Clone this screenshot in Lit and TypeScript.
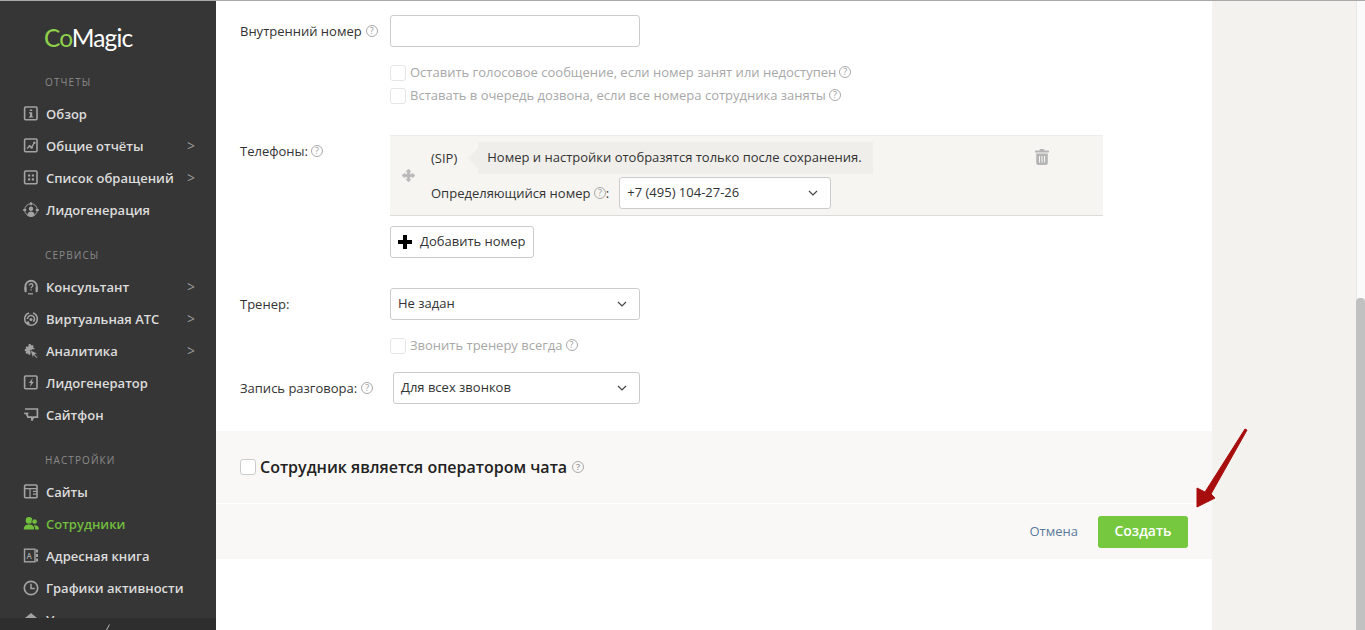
import { LitElement, html, css, svg } from "lit";
import { customElement } from "lit/decorators.js";

const ic = (body: unknown) => html`<svg class="ic" viewBox="0 0 16 16" width="16" height="16">${body}</svg>`;
const box = svg`<rect x="1.600" y="1" width="12.400" height="12.800" rx="1" fill="none" stroke="currentColor" stroke-width="1.600"/>`;

const icons: Record<string, unknown> = {
  info: ic(svg`${box}<path d="M6.800 3.400h2.400V5H6.800zM6 6.200h3.200v4.200h1v1.200H5.800v-1.200h1.200V7.400H6z" fill="currentColor"/>`),
  chart: ic(svg`${box}<path d="M4 10.500l2.600-2.400 2 1.400L11.400 4.500" fill="none" stroke="currentColor" stroke-width="1.300"/><circle cx="6.600" cy="8.100" r="1.200" fill="currentColor"/><circle cx="8.700" cy="9.500" r="1.200" fill="currentColor"/><circle cx="11.400" cy="4.700" r="1.200" fill="currentColor"/>`),
  list: ic(svg`${box}<path d="M5 4.400h2.200v2.200H5zM8.800 4.400H11v2.200H8.800zM5 8.200h2.200v2.200H5zM8.800 8.200H11v2.200H8.800z" fill="currentColor"/>`),
  lead: ic(svg`<circle cx="8" cy="8" r="6.300" fill="none" stroke="currentColor" stroke-width="1"/><circle cx="8" cy="6.800" r="2.200" fill="currentColor"/><path d="M4.300 13.400c.4-2.800 1.900-3.800 3.700-3.800s3.300 1 3.700 3.800A6.200 6.200 0 0 1 8 15a6.200 6.200 0 0 1-3.700-1.600z" fill="currentColor"/><path d="M8 .2v3M.2 8h3M12.800 8h3" stroke="currentColor" stroke-width="1.800"/>`),
  consult: ic(svg`<path d="M2.400 10.500V7.400a5.700 5.700 0 0 1 11.400 0v3.100" fill="none" stroke="currentColor" stroke-width="1.900"/><path d="M1.400 8.200h2.200v5H2.600a1.200 1.200 0 0 1-1.200-1.200zM12.600 8.200h2.200v3.800a1.200 1.200 0 0 1-1.200 1.200h-1z" fill="currentColor"/><path d="M6.300 6.400c0-2.200 3.600-2.200 3.600 0 0 1.400-1.800 1.400-1.800 2.800M8.100 10.200v1.400" fill="none" stroke="currentColor" stroke-width="1.300"/><path d="M5 14.800h5" stroke="currentColor" stroke-width="1.300"/>`),
  atc: ic(svg`<circle cx="8" cy="8" r="6.300" fill="none" stroke="currentColor" stroke-width="1.600" stroke-dasharray="27 4"/><path d="M4.500 8a3.500 3.500 0 0 1 7 0c0 1.200-.6 2-1.200 2.600" fill="none" stroke="currentColor" stroke-width="1.600"/><circle cx="8" cy="8.400" r="1.500" fill="currentColor"/><path d="M2.600 11.500l3-1.600 1.200 3.200-2 .9z" fill="currentColor"/>`),
  gear: ic(svg`<path d="M5.800 1h1.800l.4 1.500 1.400-.6 1.200 1.200-.7 1.300 1.500.5v1.400H9L8 9.400 6.800 12l-1.200-.3-.4-1.400-1.400.6L2.600 9.700l.7-1.300L1.800 8V6.200l1.500-.4-.7-1.400 1.200-1.200 1.400.7z" fill="currentColor"/><path d="M7.200 7l7.400 3.400-2.700 1 2.800 2.800-1.100 1.100-2.800-2.800-1 2.600z" fill="currentColor" stroke="#363636" stroke-width=".7"/>`),
  bolt: ic(svg`${box}<path d="M9.800 3L5.800 8h2.200L6.800 12l4.200-5.200H8.800z" fill="currentColor"/>`),
  phone: ic(svg`<path d="M2 2h12.400v8.200H10.600L8.800 13.600v-3.400H5L3.400 6.400" fill="none" stroke="currentColor" stroke-width="1.700"/><path d="M1.200 6.400h4.200" stroke="currentColor" stroke-width="1.600"/>`),
  sites: ic(svg`${box}<path d="M2 4.600h12M7 4.600v8.800M10 7.400h3.500M10 10.200h3.500" fill="none" stroke="currentColor" stroke-width="1.200"/>`),
  staff: ic(svg`<circle cx="6" cy="4.400" r="3.300" fill="currentColor"/><path d="M.8 13.600c0-3.800 2.400-5 5.200-5s5.200 1.200 5.200 5z" fill="currentColor"/><circle cx="11.600" cy="5.600" r="2.700" fill="currentColor" stroke="#363636" stroke-width=".8"/><path d="M12.200 13.600h3.800c0-3-1.600-4.400-4.400-4.400l-.8.600c1 .9 1.400 2.200 1.400 3.800z" fill="currentColor"/>`),
  book: ic(svg`<rect x="1.500" y="1.200" width="10.500" height="12.600" fill="none" stroke="currentColor" stroke-width="1.400"/><path d="M13 1.500h2v3h-2zM13 6h2v3h-2zM13 10.500h2v3h-2z" fill="currentColor"/><text x="3.400" y="10.500" font-size="8" font-family="Open Sans" fill="currentColor">A</text>`),
  clock: ic(svg`<circle cx="8" cy="8" r="6.700" fill="none" stroke="currentColor" stroke-width="1.700"/><path d="M8 3.800V8.600h3.800" fill="none" stroke="currentColor" stroke-width="1.500"/>`),
  notif: ic(svg`<path d="M8 1l6 5v9H2V6z" fill="currentColor"/>`),
};

const help = () => html`<span class="help">?</span>`;
const chevron = html`<svg class="chev" viewBox="0 0 10 6" width="10" height="6"><path d="M1 1l4 4 4-4" fill="none" stroke="#444" stroke-width="1.200"/></svg>`;

@customElement("app-side")
class AppSide extends LitElement {
  static styles = css`
    :host { display: block; width: 216px; height: 100%; background: #363636; position: relative; overflow: hidden; flex: none; font-family: "Open Sans", sans-serif; }
    .logo { height: 66px; padding-left: 44px; font-family: Lato, sans-serif; font-size: 24.500px; line-height: 76px; color: #fff; letter-spacing: -0.900px; box-sizing: border-box; white-space: nowrap; }
    .logo b { color: #8fd14a; font-weight: 400; }
    .label { height: 32px; line-height: 32px; padding-left: 45px; font-size: 10px; letter-spacing: 1.100px; color: #8a8a8a; text-transform: uppercase; }
    .group { margin-bottom: 13px; }
    .item { height: 32px; display: flex; align-items: center; padding-left: 23px; font-size: 13px; font-weight: 600; color: #dcdcdc; position: relative; white-space: nowrap; }
    .item .ic { color: #a3a3a3; margin-right: 7px; flex: none; }
    .item.on, .item.on .ic { color: #71bd3c; }
    .arr { position: absolute; left: 187px; top: 6px; color: #999; font-weight: 400; font-size: 14px; }
    .foot { position: absolute; left: 0; right: 0; bottom: 0; height: 12px; background: #2e2e2e; }
    .foot svg { position: absolute; left: 105px; top: 6px; }
  `;
  item(icon: string, text: string, arrow = false, on = false) {
    return html`<div class="item ${on ? "on" : ""}">${icons[icon]}<span>${text}</span>${arrow ? html`<span class="arr">&gt;</span>` : ""}</div>`;
  }
  render() {
    return html`
      <div class="logo"><b>Co</b>Magic</div>
      <div class="group">
        <div class="label">Отчеты</div>
        ${this.item("info", "Обзор")}
        ${this.item("chart", "Общие отчёты", true)}
        ${this.item("list", "Список обращений", true)}
        ${this.item("lead", "Лидогенерация")}
      </div>
      <div class="group">
        <div class="label">Сервисы</div>
        ${this.item("consult", "Консультант", true)}
        ${this.item("atc", "Виртуальная АТС", true)}
        ${this.item("gear", "Аналитика", true)}
        ${this.item("bolt", "Лидогенератор")}
        ${this.item("phone", "Сайтфон")}
      </div>
      <div class="group">
        <div class="label">Настройки</div>
        ${this.item("sites", "Сайты")}
        ${this.item("staff", "Сотрудники", false, true)}
        ${this.item("book", "Адресная книга")}
        ${this.item("clock", "Графики активности")}
        ${this.item("notif", "Уведомления")}
      </div>
      <div class="foot"><svg width="6" height="6" viewBox="0 0 6 6"><path d="M4.500 .5L1.500 6" fill="none" stroke="#bbb" stroke-width="1"/></svg></div>
    `;
  }
}

@customElement("app-root")
class AppRoot extends LitElement {
  static styles = css`
    :host { display: flex; width: 1365px; height: 630px; overflow: hidden; position: relative; font-family: "Open Sans", sans-serif; font-size: 13px; color: #333; background: #fff; }
    * { box-sizing: border-box; }
    .topline { position: absolute; left: 0; right: 0; top: 0; height: 1px; background: #a9a9a9; z-index: 3; }
    .main { width: 996px; flex: none; background: #fff; padding-top: 15px; }
    .rest { width: 144px; flex: none; background: #f3f2ef; }
    .bar { width: 9px; flex: none; background: #fafafa; border-left: 1px solid #e9e9e6; position: relative; }
    .thumb { position: absolute; left: -1px; right: 0; top: 298px; bottom: 0; background: #c1c1c1; border-radius: 4px 4px 0 0; }
    .row { display: flex; margin-left: 24px; }
    .lab { width: 150px; flex: none; display: flex; align-items: center; gap: 4px; white-space: nowrap; line-height: 30px; }
    .ctl { border: 1px solid #ccc; border-radius: 3px; background: #fff; height: 32px; width: 250px; display: flex; align-items: center; justify-content: space-between; padding: 0 12px 2px 7px; white-space: nowrap; line-height: 28px; }
    .chev { flex: none; margin-top: 2px; }
    .check { display: flex; align-items: flex-start; gap: 4px; color: #a8a8a8; margin-left: 174px; height: 16px; white-space: nowrap; line-height: 14px; }
    .check .help { margin: 1px 0 0 -1px; }
    .box { width: 16px; height: 16px; flex: none; border: 1px solid #e6e6e6; border-radius: 3px; background: #fff; }
    .help { width: 12px; height: 12px; flex: none; border: 1px solid #a9a9a9; border-radius: 50%; font-size: 9px; line-height: 10px; text-align: center; color: #999; display: inline-block; }
    .mt18 { margin-top: 18px; }
    .mt7 { margin-top: 7px; }
    .phones-row { margin-top: 31px; }
    .phones-lab { align-items: flex-start; padding-top: 8px; height: 32px; line-height: 16px; gap: 3px; }
    .phones-lab .help { margin-top: 2px; }
    .phones { width: 713px; height: 81px; background: #f6f5f2; border-top: 1px solid #eeecea; border-bottom: 1px solid #dcdcda; display: flex; padding: 6px 54px 0 12px; }
    .drag { align-self: center; flex: none; color: #b9b9b9; margin-top: -7px; }
    .pcol { margin-left: 16px; flex: 1; display: flex; flex-direction: column; gap: 3px; }
    .pline { display: flex; align-items: center; height: 32px; white-space: nowrap; line-height: 30px; }
    .tip { position: relative; margin-left: 21px; width: 395px; height: 32px; line-height: 30px; padding-left: 9px; background: #f0eeeb; }
    .tip::before { content: ""; position: absolute; left: -10px; top: 6px; border: 10px solid transparent; border-left: 0; border-right-color: #f0eeeb; }
    .phone-sel { width: 212px; margin-left: 10px; }
    .trash { margin-top: 7px; flex: none; color: #b5b5b5; }
    .add { margin: 10px 0 0 174px; width: 144px; height: 32px; border: 1px solid #ccc; border-radius: 3px; display: flex; align-items: center; gap: 8px; padding: 0 0 2px 7px; background: #fff; white-space: nowrap; line-height: 28px; }
    .add svg { margin-top: 1px; }
    .mt30 { margin-top: 30px; }
    .rec-sel { width: 247px; margin-left: 3px; }
    .chat { margin-top: 27px; height: 72px; background: #f9f8f6; display: flex; align-items: center; padding: 0 24px; gap: 4px; font-size: 16px; font-weight: 600; color: #222; white-space: nowrap; line-height: 70px; }
    .chat .box { border-color: #ccc; }
    .chat .help { margin-left: 1px; }
    .foot { margin-top: 1px; height: 55px; background: #f9f8f6; display: flex; align-items: center; justify-content: flex-end; padding-right: 24px; gap: 20px; }
    .cancel { color: #5b7a9c; padding-bottom: 2px; }
    .create { width: 90px; height: 32px; border-radius: 3px; background: #76c83f; color: #fff; font-size: 14px; font-weight: 600; display: flex; align-items: center; justify-content: center; line-height: 28px; padding-bottom: 2px; }
    .arrow { position: absolute; left: 1190px; top: 424px; z-index: 2; }
  `;
  render() {
    return html`
      <div class="topline"></div>
      <app-side></app-side>
      <div class="main">
        <div class="row">
          <div class="lab">Внутренний номер ${help()}</div>
          <div class="ctl"></div>
        </div>
        <div class="check mt18"><span class="box"></span>Оставить голосовое сообщение, если номер занят или недоступен ${help()}</div>
        <div class="check mt7"><span class="box"></span>Вставать в очередь дозвона, если все номера сотрудника заняты ${help()}</div>
        <div class="row phones-row">
          <div class="lab phones-lab">Телефоны: ${help()}</div>
          <div class="phones">
            <svg class="drag" viewBox="0 0 13 13" width="13" height="13"><path fill="currentColor" d="M6.500 0l2.300 2.600H7.700V5.300h2.700V4.200L13 6.500l-2.600 2.300V7.700H7.700v2.700h1.100L6.500 13l-2.300-2.600h1.100V7.700H2.600v1.100L0 6.500l2.600-2.300v1.100h2.700V2.600H4.200z" stroke="currentColor" stroke-width=".6"/></svg>
            <div class="pcol">
              <div class="pline">(SIP)<div class="tip">Номер и настройки отобразятся только после сохранения.</div></div>
              <div class="pline">Определяющийся номер&nbsp;${help()}:<div class="ctl phone-sel">+7 (495) 104-27-26 ${chevron}</div></div>
            </div>
            <svg class="trash" viewBox="0 0 14 16" width="14" height="16"><path fill="currentColor" d="M5 0h4l.6 1.600H13c.6 0 1 .4 1 1v1H0v-1c0-.6.4-1 1-1h3.400zM1.200 4.600h11.600V14c0 1.100-.9 2-2 2H3.200c-1.100 0-2-.9-2-2zM4 7v6.500h1V7zM6.500 7v6.500h1V7zM9 7v6.500h1V7z" fill-rule="evenodd"/></svg>
          </div>
        </div>
        <div class="add"><svg viewBox="0 0 14 14" width="14" height="14"><path d="M5 0h4v5h5v4H9v5H5V9H0V5h5z" fill="#000"/></svg>Добавить номер</div>
        <div class="row mt30">
          <div class="lab">Тренер:</div>
          <div class="ctl">Не задан ${chevron}</div>
        </div>
        <div class="check mt18"><span class="box"></span>Звонить тренеру всегда ${help()}</div>
        <div class="row mt18">
          <div class="lab">Запись разговора: ${help()}</div>
          <div class="ctl rec-sel">Для всех звонков ${chevron}</div>
        </div>
        <div class="chat"><span class="box"></span>Сотрудник является оператором чата ${help()}</div>
        <div class="foot">
          <span class="cancel">Отмена</span>
          <span class="create">Создать</span>
        </div>
      </div>
      <div class="rest"></div>
      <div class="bar"><div class="thumb"></div></div>
      <svg class="arrow" width="64" height="90" viewBox="0 0 64 90"><path d="M55 5L57 6 21 70l4 4L7 83V64l8 4z" fill="#a80d0d" stroke="#a80d0d" stroke-linejoin="round"/></svg>
    `;
  }
}
